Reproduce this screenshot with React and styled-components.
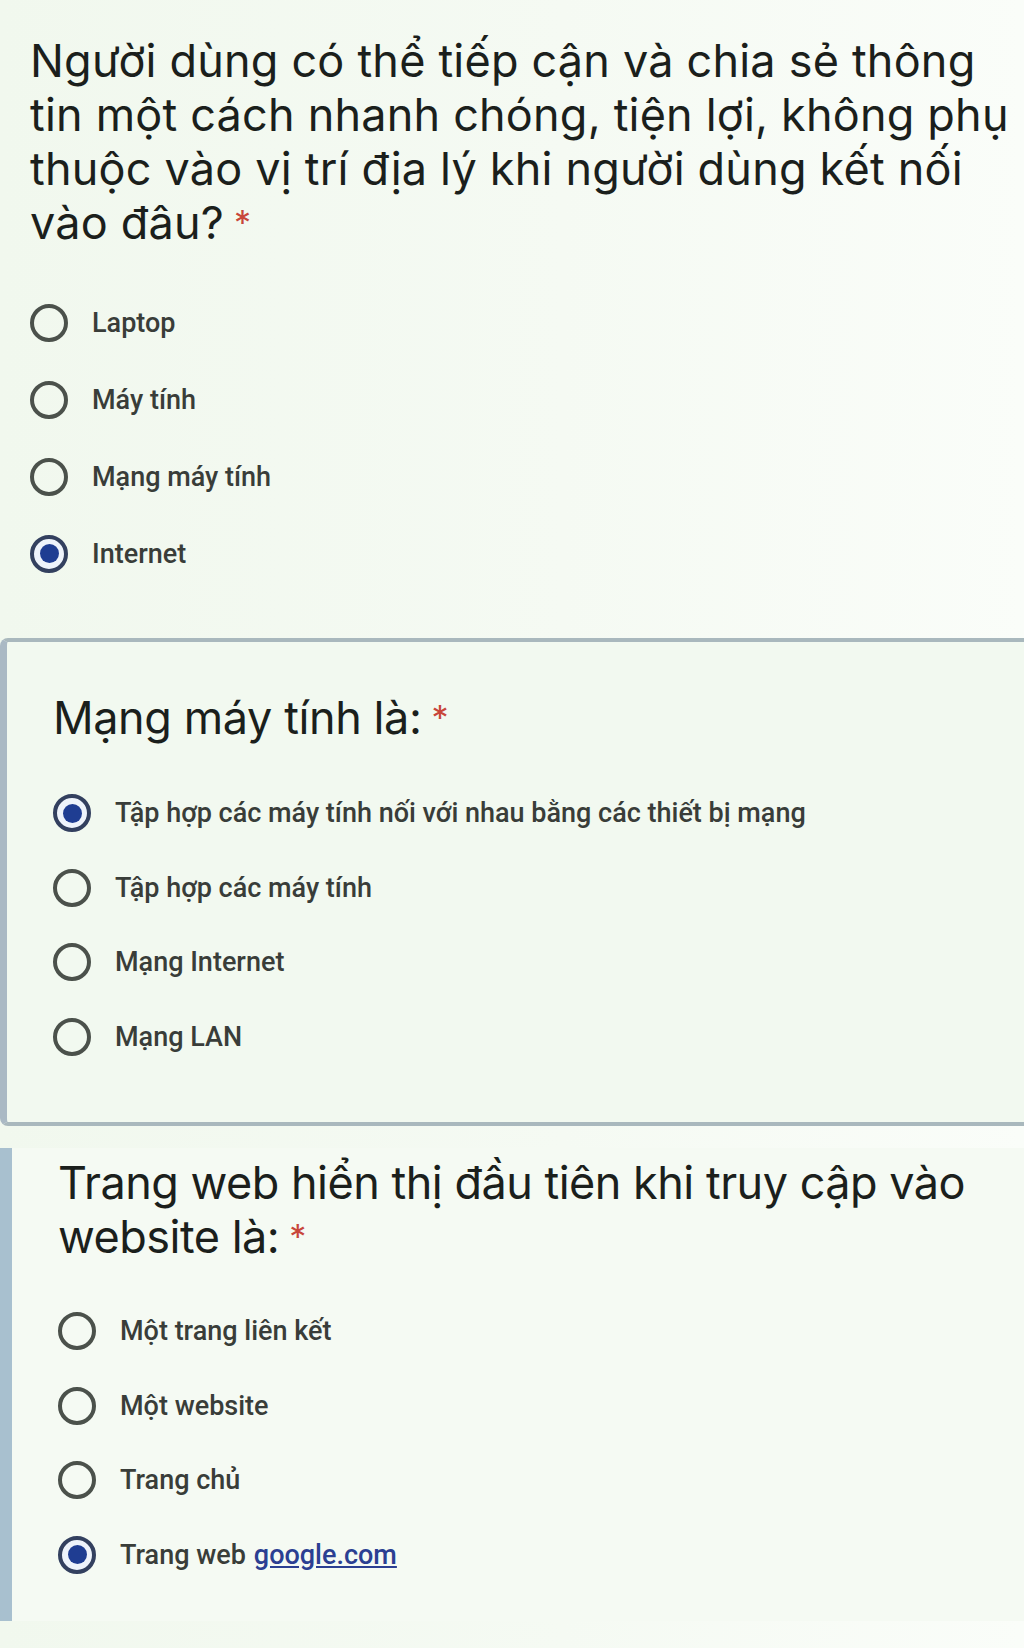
import React from 'react'
import styled, { createGlobalStyle } from 'styled-components'

const GlobalStyle = createGlobalStyle`
  body {
    margin: 0;
    background: #f4faf2;
    font-family: Roboto, "Liberation Sans", sans-serif;
    color: #222622;
  }
`

const Page = styled.div`
  display: flex;
  flex-direction: column;
  width: 1024px;
  min-height: 1648px;
  background: linear-gradient(90deg, #f1f8ee 0%, #f5faf3 55%, #fafdf9 100%);
`

const Card = styled.section`
  display: flex;
  flex-direction: column;
  gap: ${(p) => p.$gap}px;
  padding: ${(p) => p.$pad};
  ${(p) =>
    p.$variant === 'boxed' &&
    `
    border-top: 4px solid #a9b8bd;
    border-bottom: 4px solid #a9b8bd;
    border-left: 7px solid #aab9c4;
    border-top-left-radius: 8px;
    border-bottom-left-radius: 8px;
    background: #f2f9f0;
  `}
  ${(p) =>
    p.$variant === 'bar' &&
    `
    margin-top: 22px;
    border-left: 12px solid #a8c0cf;
    background: #f5faf3;
  `}
`

const Title = styled.h2`
  margin: 0;
  font-family: Inter, "Open Sans", sans-serif;
  font-weight: 400;
  font-size: 45px;
  line-height: 54px;
  letter-spacing: ${(p) => p.$spacing}px;
  color: #1b1f1c;
  white-space: nowrap;
`

const Star = styled.span`
  color: #c8463a;
  margin-left: 10px;
  font-size: 34px;
  vertical-align: 4px;
`

const Options = styled.div`
  display: flex;
  flex-direction: column;
`

const Option = styled.label`
  display: flex;
  align-items: center;
  gap: 24px;
  height: ${(p) => p.$row}px;
  font-size: 27px;
  font-weight: 500;
  color: #393d39;
  white-space: nowrap;
`

const Radio = styled.span`
  box-sizing: border-box;
  flex: none;
  width: 38px;
  height: 38px;
  border-radius: 50%;
  border: 4px solid ${(p) => (p.$on ? '#33405f' : '#4b514b')};
  display: flex;
  align-items: center;
  justify-content: center;
  background: ${(p) => (p.$on ? '#eef3fb' : 'transparent')};

  &::after {
    content: '';
    display: ${(p) => (p.$on ? 'block' : 'none')};
    width: 19px;
    height: 19px;
    border-radius: 50%;
    background: #1f3d92;
  }
`

const Link = styled.a`
  color: #2b3f92;
  text-decoration: underline;
  margin-left: 8px;
`

const Question = ({ title, options, selected, variant, pad, gap, row, spacing = 0.2 }) => (
  <Card $variant={variant} $pad={pad} $gap={gap}>
    <Title $spacing={spacing}>
      {title.map((line, i) => (
        <div key={i}>
          {line}
          {i === title.length - 1 && <Star>*</Star>}
        </div>
      ))}
    </Title>
    <Options>
      {options.map((o, i) => (
        <Option key={i} $row={row}>
          <Radio $on={i === selected} />
          <span>{o}</span>
        </Option>
      ))}
    </Options>
  </Card>
)

export default function App() {
  return (
    <Page>
      <GlobalStyle />
      <Question
        variant="plain"
        pad="34px 0 46px 30px"
        gap={34}
        row={77}
        selected={3}
        title={[
          'Người dùng có thể tiếp cận và chia sẻ thông',
          'tin một cách nhanh chóng, tiện lợi, không phụ',
          'thuộc vào vị trí địa lý khi người dùng kết nối',
          'vào đâu?',
        ]}
        options={['Laptop', 'Máy tính', 'Mạng máy tính', 'Internet']}
      />
      <Question
        variant="boxed"
        pad="49px 0 48px 46px"
        gap={31}
        row={74.5}
        selected={0}
        spacing={-0.4}
        title={['Mạng máy tính là:']}
        options={[
          'Tập hợp các máy tính nối với nhau bằng các thiết bị mạng',
          'Tập hợp các máy tính',
          'Mạng Internet',
          'Mạng LAN',
        ]}
      />
      <Question
        variant="bar"
        pad="8px 0 29px 46px"
        gap={30}
        row={74.5}
        selected={3}
        spacing={-0.5}
        title={['Trang web hiển thị đầu tiên khi truy cập vào', 'website là:']}
        options={[
          'Một trang liên kết',
          'Một website',
          'Trang chủ',
          <>
            Trang web<Link href="#">google.com</Link>
          </>,
        ]}
      />
    </Page>
  )
}
